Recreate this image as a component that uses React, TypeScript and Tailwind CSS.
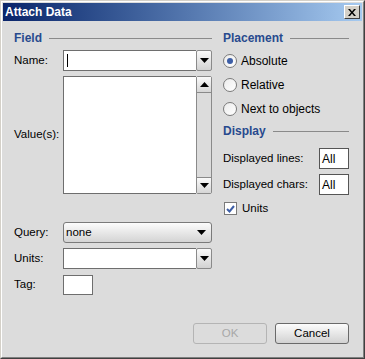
import React from "react";

const font = { fontFamily: '"Liberation Sans", Arial, sans-serif' };

function Heading({ text }: { text: string }) {
  return (
    <div className="flex items-center h-[14px] gap-[7px]">
      <span className="text-[12px] font-bold text-[#284a8e] leading-none">{text}</span>
      <div className="flex-1 h-px bg-[#8a8a8a]" />
    </div>
  );
}

function Arrow({ up }: { up?: boolean }) {
  return (
    <svg width="9" height="5" viewBox="0 0 9 5">
      <polygon points={up ? "0,5 9,5 4.5,0" : "0,0 9,0 4.5,5"} fill="#000" />
    </svg>
  );
}

function DropButton({ h = 21 }: { h?: number }) {
  return (
    <div
      className="w-[16px] shrink-0 flex items-center justify-center border border-[#8a8a8a] rounded-[2px] bg-gradient-to-b from-[#fafafa] to-[#d2d2d2]"
      style={{ height: h }}
    >
      <Arrow />
    </div>
  );
}

function Combo({ caret }: { caret?: boolean }) {
  return (
    <div className="flex w-[149px] h-[21px]">
      <div className="flex-1 bg-white border border-[#6e6e6e] border-r-0 flex items-center pl-[3px]">
        {caret && <div className="w-px h-[13px] bg-black" />}
      </div>
      <DropButton />
    </div>
  );
}

function Radio({ label, checked }: { label: string; checked?: boolean }) {
  return (
    <div className="flex items-center gap-[4px] h-[24px]">
      <div className="w-[14px] h-[14px] rounded-full border border-[#7a7a7a] bg-gradient-to-br from-[#ececec] to-[#ffffff] flex items-center justify-center">
        {checked && <div className="w-[6px] h-[6px] rounded-full bg-[#3d5ea6]" />}
      </div>
      <span className="text-[12px] text-black">{label}</span>
    </div>
  );
}

function SmallInput({ value }: { value: string }) {
  return (
    <div className="w-[30px] h-[21px] bg-white border border-[#555] flex items-center pl-[2px] text-[12px] text-black">
      {value}
    </div>
  );
}

export default function App() {
  return (
    <div
      style={font}
      className="w-[365px] h-[359px] bg-[#dcdcdc] border-l border-t border-[#d4d0c8] border-r border-b border-r-[#404040] border-b-[#404040] flex flex-col"
    >
      <div className="flex-1 flex flex-col border-l border-t border-white border-r border-b border-r-[#808080] border-b-[#808080] p-[1px]">
        {/* title bar */}
        <div className="h-[18px] flex items-center justify-between pl-[2px] pr-[2px] bg-gradient-to-r from-[#0a246a] to-[#a6caf0]">
          <span className="text-white font-bold text-[12px] leading-none">Attach Data</span>
          <div className="w-[16px] h-[14px] bg-[#d4d0c8] border border-t-white border-l-white border-r-[#404040] border-b-[#404040] flex items-center justify-center">
            <svg width="8" height="7" viewBox="0 0 8 7">
              <path d="M0 0 L2 0 L4 2.5 L6 0 L8 0 L5 3.5 L8 7 L6 7 L4 4.5 L2 7 L0 7 L3 3.5 Z" fill="#000" />
            </svg>
          </div>
        </div>

        {/* body */}
        <div className="flex-1 flex flex-col pl-[11px] pr-[13px] pt-[10px] text-[11.5px] text-black">
          <div className="flex gap-[11px]">
            {/* left column */}
            <div className="w-[198px] flex flex-col">
              <Heading text="Field" />
              <div className="flex items-center mt-[5px]">
                <span className="w-[49px]">Name:</span>
                <Combo caret />
              </div>
              <div className="flex items-center mt-[5px]">
                <span className="w-[49px]">Value(s):</span>
                <div className="flex w-[149px] h-[118px]">
                  <div className="flex-1 bg-white border border-[#6e6e6e] border-r-0" />
                  <div className="w-[16px] flex flex-col bg-[#e4e4e4] border border-[#8a8a8a] rounded-[2px]">
                    <div className="h-[16px] flex items-center justify-center border-b border-[#8a8a8a] bg-gradient-to-b from-[#fafafa] to-[#d6d6d6]">
                      <Arrow up />
                    </div>
                    <div className="flex-1 bg-[#dcdcdc]" />
                    <div className="h-[16px] flex items-center justify-center border-t border-[#8a8a8a] bg-gradient-to-b from-[#fafafa] to-[#d6d6d6]">
                      <Arrow />
                    </div>
                  </div>
                </div>
              </div>
              <div className="flex items-center mt-[28px]">
                <span className="w-[49px]">Query:</span>
                <div className="w-[149px] h-[21px] rounded-[3px] border border-[#7a7a7a] bg-gradient-to-b from-[#fcfcfc] to-[#d4d4d4] flex items-center justify-between pl-[2px] pr-[5px]">
                  <span>none</span>
                  <Arrow />
                </div>
              </div>
              <div className="flex items-center mt-[5px]">
                <span className="w-[49px]">Units:</span>
                <Combo />
              </div>
              <div className="flex items-center mt-[6px]">
                <span className="w-[49px]">Tag:</span>
                <div className="w-[30px] h-[20px] bg-white border border-[#6e6e6e]" />
              </div>
            </div>

            {/* right column */}
            <div className="flex-1 flex flex-col">
              <Heading text="Placement" />
              <div className="flex flex-col mt-[4px]">
                <Radio label="Absolute" checked />
                <Radio label="Relative" />
                <Radio label="Next to objects" />
              </div>
              <div className="mt-[3px]">
                <Heading text="Display" />
              </div>
              <div className="flex items-center justify-between mt-[10px]">
                <span>Displayed lines:</span>
                <SmallInput value="All" />
              </div>
              <div className="flex items-center justify-between mt-[5px]">
                <span>Displayed chars:</span>
                <SmallInput value="All" />
              </div>
              <div className="flex items-center gap-[5px] mt-[5px] pl-[1px]">
                <div className="w-[13px] h-[13px] border border-[#7a7a7a] bg-white flex items-center justify-center">
                  <svg width="9" height="8" viewBox="0 0 9 8">
                    <path d="M1 4 L3.5 6.5 L8 1" stroke="#3d5ea6" strokeWidth="2" fill="none" />
                  </svg>
                </div>
                <span>Units</span>
              </div>
            </div>
          </div>

          <div className="flex-1" />
          {/* footer */}
          <div className="flex justify-end gap-[8px] mb-[12px]">
            <div className="w-[74px] h-[21px] rounded-[3px] border border-[#b4b4b4] flex items-center justify-center text-[#a8a8a8]">
              OK
            </div>
            <div className="w-[74px] h-[21px] rounded-[3px] border border-[#6a6a6a] bg-gradient-to-b from-[#fcfcfc] to-[#d2d2d2] flex items-center justify-center">
              Cancel
            </div>
          </div>
        </div>
      </div>
    </div>
  );
}
